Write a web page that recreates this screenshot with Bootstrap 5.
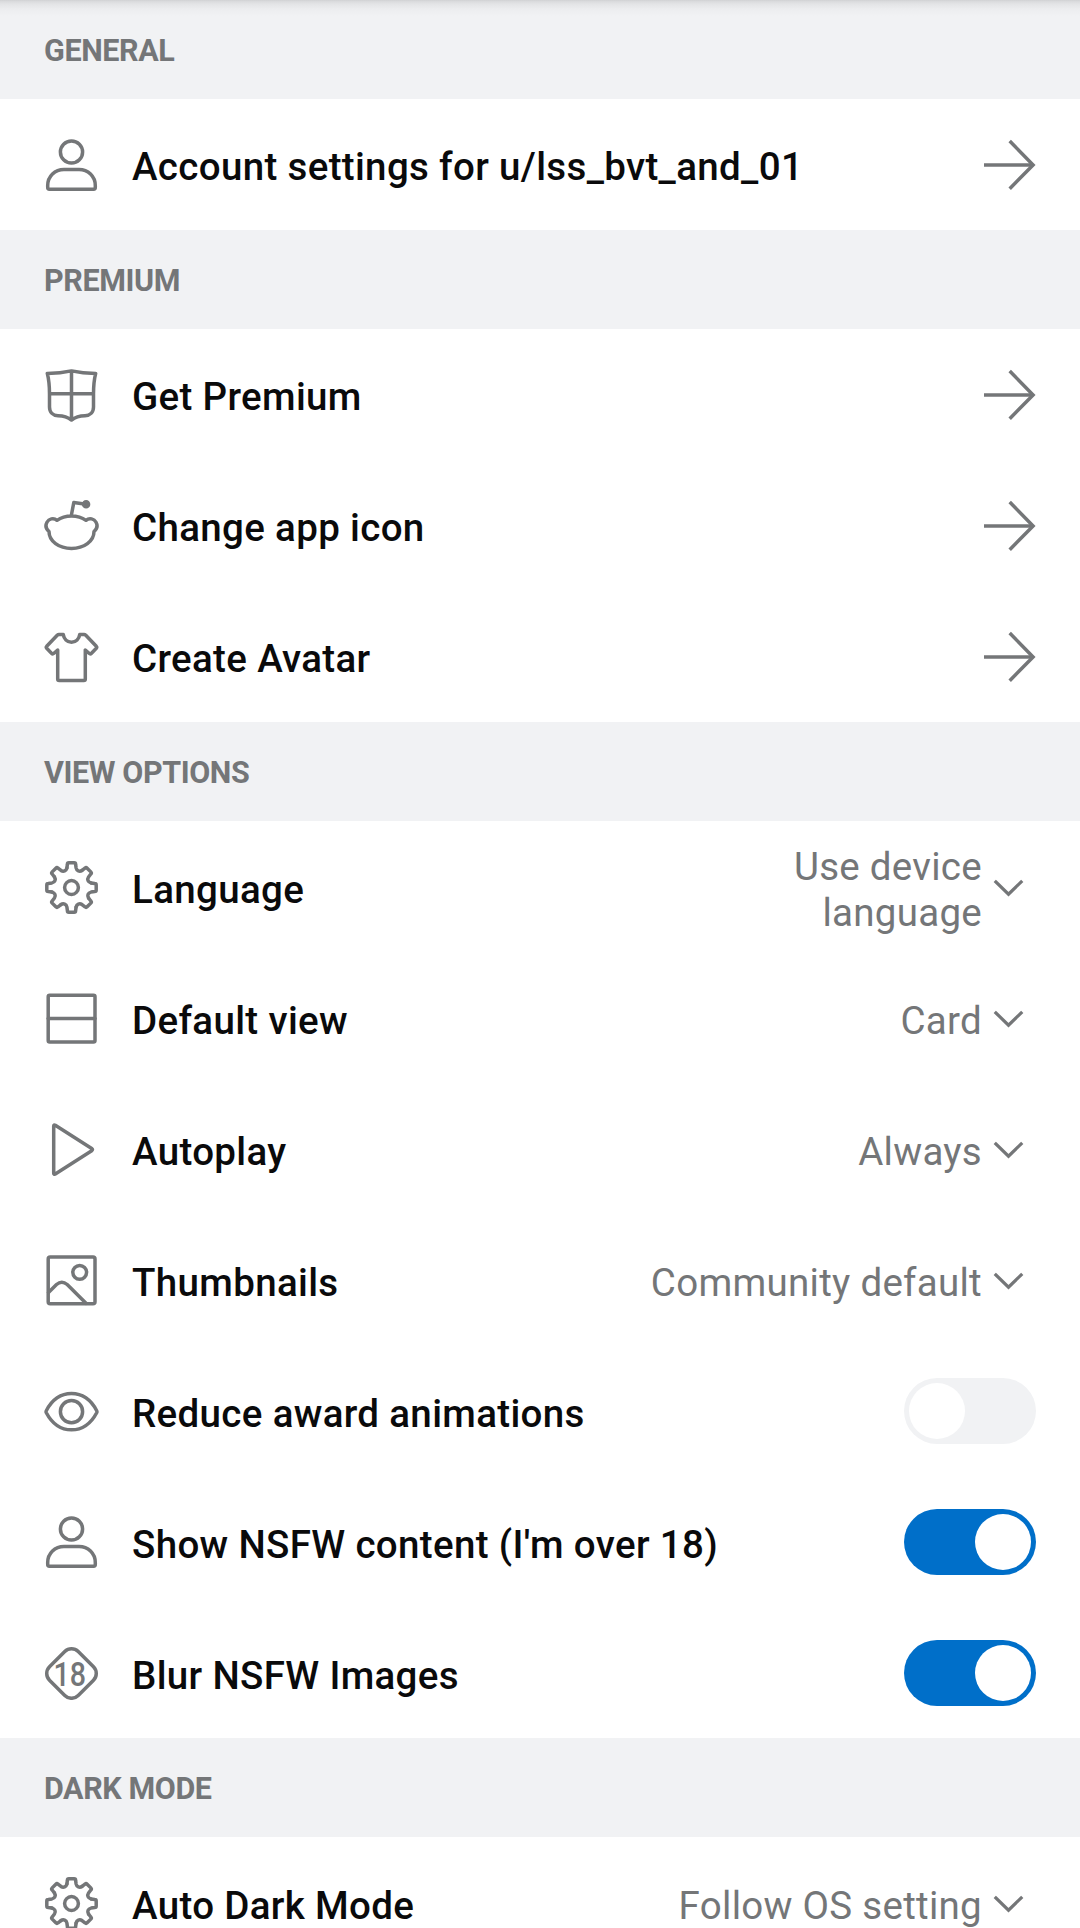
<!DOCTYPE html>
<html lang="en">
<head>
<meta charset="utf-8">
<meta name="viewport" content="width=device-width, initial-scale=1">
<title>Settings</title>
<link rel="stylesheet" href="https://cdn.jsdelivr.net/npm/bootstrap@5.3.0/dist/css/bootstrap.min.css">
<style>
body{font-family:Roboto,"Liberation Sans",sans-serif;background:#fff;overflow:hidden;height:1928px}
.sect{height:99px;padding:3px 44px 0;background:#f1f2f4;color:#747678;font-size:30.5px;font-weight:700;line-height:1;letter-spacing:-.4px;margin:0}
.sect-top{background:linear-gradient(#cfd0d2 0,#d8d9db 1px,#e3e4e6 4px,#ecedef 9px,#f1f2f4 16px)}
.item{height:131px;padding:0 44px}
.ico{width:55px;height:55px;flex:none;display:block;fill:none;stroke:#747678;stroke-width:3.5;stroke-linecap:round;stroke-linejoin:round;overflow:visible}
.num{font:500 33px Roboto,sans-serif;fill:#747678;stroke:none}
.lbl{font-size:38.5px;font-weight:500;color:#0a0a0b;line-height:45.5px;letter-spacing:.34px;padding-top:5px;margin-left:33px;white-space:nowrap}
.val{font-size:38.5px;font-weight:400;color:#747678;line-height:46px;letter-spacing:.28px;padding-top:6px;margin-right:-1px;text-align:right;white-space:nowrap}
.lower .lbl{padding-top:7px}
.toggle{width:132px;height:66px;padding:5px;background:#f1f2f4;margin-top:1px}
.toggle.on{background:#006fc9;justify-content:flex-end}
.knob{width:56px;height:56px;background:#fff}
</style>
<script src="https://cdn.jsdelivr.net/npm/bootstrap@5.3.0/dist/js/bootstrap.bundle.min.js"></script>
</head>
<body>
<svg class="d-none">
  <symbol id="user" viewBox="0 0 55 55"><circle cx="27.5" cy="15" r="11.1"/><path d="M5.4 52.2Q3.7 52.2 3.7 50.5V48.5C3.7 39 11 32.4 20 32.4H35C44 32.4 51.3 39 51.3 48.5V50.5Q51.3 52.2 49.6 52.2Z"/></symbol>
  <symbol id="shield" viewBox="0 0 55 55"><path d="M3.3 6.4C11.5 6.4 20 5.6 27.5 3.9C35 5.6 43.5 6.4 51.7 6.4C50 13 49.5 20 49.5 27V40C49.5 45.4 46 48.7 41 48.8C36 48.9 31 50.3 27.5 53C24 50.3 19 48.9 14 48.8C9 48.7 5.5 45.4 5.5 40V27C5.5 20 5 13 3.3 6.4ZM27.5 4V53M5.5 26.8H49.5"/></symbol>
  <symbol id="snoo" viewBox="0 0 55 55"><path d="M13 22.3C17 19.4 22 17.9 27.5 17.9S38 19.4 42 22.3C45.500 19.400 50.200 20.900 51.900 24C53.800 27.400 53 31 50 33.500C50 43.200 40 50.400 27.500 50.400S5 43.200 5 33.500C2 31 1.200 27.400 3.100 24C4.800 20.900 9.500 19.400 13 22.300ZM27.400 17L29.800 4.500L42 6.200"/><circle cx="42.100" cy="6.200" r="2.500" fill="#747678"/></symbol>
  <symbol id="shirt" viewBox="0 0 55 55"><path d="M15 5.400H19.200C20 10 23 13.300 27.500 13.300S35 10 35.800 5.400H40Q41 5.400 41.800 6.200L52.300 17.300Q53.200 18.300 52.300 19.300L47.500 24.300Q46.300 25.500 45 24.300L41.300 21V50Q41.300 51.500 39.800 51.500H15.200Q13.700 51.500 13.700 50V21L10 24.300Q8.700 25.500 7.500 24.300L2.700 19.300Q1.800 18.300 2.700 17.300L13.200 6.200Q14 5.400 15 5.400Z"/></symbol>
  <path id="tooth" d="M-4.600 -19.500L-4.100 -23.200Q-4.100 -24.700 -2.600 -24.700H2.600Q4.100 -24.700 4.100 -23.200L4.600 -19.500C5.200 -16.500 8 -15.400 10.540 -17.040"/>
  <symbol id="gear" viewBox="0 0 55 55"><g transform="translate(27.500 28.500)"><circle r="6.900"/><use href="#tooth"/><use href="#tooth" transform="rotate(45)"/><use href="#tooth" transform="rotate(90)"/><use href="#tooth" transform="rotate(135)"/><use href="#tooth" transform="rotate(180)"/><use href="#tooth" transform="rotate(225)"/><use href="#tooth" transform="rotate(270)"/><use href="#tooth" transform="rotate(315)"/></g></symbol>
  <symbol id="cardview" viewBox="0 0 55 55"><rect x="4.200" y="5.200" width="46.800" height="46.800" rx="1.500"/><path d="M4.200 28.600H51"/></symbol>
  <symbol id="play" viewBox="0 0 55 55"><path d="M9.700 5Q9.700 3.300 11.300 4.200L47.700 27.500Q49.300 28.600 47.700 29.700L11.300 53Q9.700 53.900 9.700 52.200Z"/></symbol>
  <symbol id="image" viewBox="0 0 55 55"><rect x="4.200" y="5" width="46.800" height="46.800" rx="2"/><circle cx="35.700" cy="20.300" r="6.900"/><path d="M4.500 40.500L12.500 32.500Q17.800 28 23.200 32.500L42 51.300"/></symbol>
  <symbol id="eye" viewBox="0 0 55 55"><path d="M2.300 27.700C8 17 17 10.600 27.500 10.600S47 17 52.700 27.700Q53.200 28.700 52.700 29.700C47 40.400 38 46.800 27.500 46.800S8 40.400 2.300 29.700Q1.800 28.700 2.300 27.700Z"/><circle cx="27.500" cy="28.700" r="11.100"/></symbol>
  <symbol id="nsfw" viewBox="0 0 55 55"><rect x="-20.300" y="-20.300" width="40.600" height="40.600" rx="9.500" transform="translate(27.500 28.500) rotate(45)"/><text class="num" x="9.600" y="41" textLength="32.500" lengthAdjust="spacingAndGlyphs">18</text></symbol>
  <symbol id="arrow" viewBox="0 0 55 55"><path d="M3 27.900H52" stroke-linecap="butt"/><path d="M28.700 4.100L52.100 27.900L28.700 51.700" stroke-linejoin="miter" stroke-linecap="butt"/></symbol>
  <symbol id="down" viewBox="0 0 55 55"><path d="M14.900 22.900L27.500 35.200L40.100 22.900" stroke-linecap="square" stroke-linejoin="miter" stroke-width="3.200"/></symbol>
</svg>
<main>
  <h2 class="sect sect-top d-flex align-items-center">GENERAL</h2>
  <div class="item d-flex align-items-center"><svg class="ico"><use href="#user"/></svg><span class="lbl">Account settings for u/lss_bvt_and_01</span><svg class="ico ms-auto"><use href="#arrow"/></svg></div>

  <h2 class="sect d-flex align-items-center">PREMIUM</h2>
  <div class="item d-flex align-items-center"><svg class="ico"><use href="#shield"/></svg><span class="lbl">Get Premium</span><svg class="ico ms-auto"><use href="#arrow"/></svg></div>
  <div class="item d-flex align-items-center"><svg class="ico"><use href="#snoo"/></svg><span class="lbl">Change app icon</span><svg class="ico ms-auto"><use href="#arrow"/></svg></div>
  <div class="item d-flex align-items-center"><svg class="ico"><use href="#shirt"/></svg><span class="lbl">Create Avatar</span><svg class="ico ms-auto"><use href="#arrow"/></svg></div>

  <h2 class="sect d-flex align-items-center">VIEW OPTIONS</h2>
  <div class="lower">
  <div class="item d-flex align-items-center"><svg class="ico"><use href="#gear"/></svg><span class="lbl">Language</span><span class="val ms-auto">Use device<br>language</span><svg class="ico"><use href="#down"/></svg></div>
  <div class="item d-flex align-items-center"><svg class="ico"><use href="#cardview"/></svg><span class="lbl">Default view</span><span class="val ms-auto">Card</span><svg class="ico"><use href="#down"/></svg></div>
  <div class="item d-flex align-items-center"><svg class="ico"><use href="#play"/></svg><span class="lbl">Autoplay</span><span class="val ms-auto">Always</span><svg class="ico"><use href="#down"/></svg></div>
  <div class="item d-flex align-items-center"><svg class="ico"><use href="#image"/></svg><span class="lbl">Thumbnails</span><span class="val ms-auto">Community default</span><svg class="ico"><use href="#down"/></svg></div>
  <div class="item d-flex align-items-center"><svg class="ico"><use href="#eye"/></svg><span class="lbl">Reduce award animations</span><span class="toggle rounded-pill d-flex ms-auto" role="switch" aria-checked="false"><span class="knob rounded-circle"></span></span></div>
  <div class="item d-flex align-items-center"><svg class="ico"><use href="#user"/></svg><span class="lbl">Show NSFW content (I'm over 18)</span><span class="toggle on rounded-pill d-flex ms-auto" role="switch" aria-checked="true"><span class="knob rounded-circle"></span></span></div>
  <div class="item d-flex align-items-center"><svg class="ico"><use href="#nsfw"/></svg><span class="lbl">Blur NSFW Images</span><span class="toggle on rounded-pill d-flex ms-auto" role="switch" aria-checked="true"><span class="knob rounded-circle"></span></span></div>
  </div>

  <h2 class="sect d-flex align-items-center">DARK MODE</h2>
  <div class="lower">
  <div class="item d-flex align-items-center"><svg class="ico"><use href="#gear"/></svg><span class="lbl">Auto Dark Mode</span><span class="val ms-auto">Follow OS setting</span><svg class="ico"><use href="#down"/></svg></div>
  </div>
</main>
</body>
</html>
